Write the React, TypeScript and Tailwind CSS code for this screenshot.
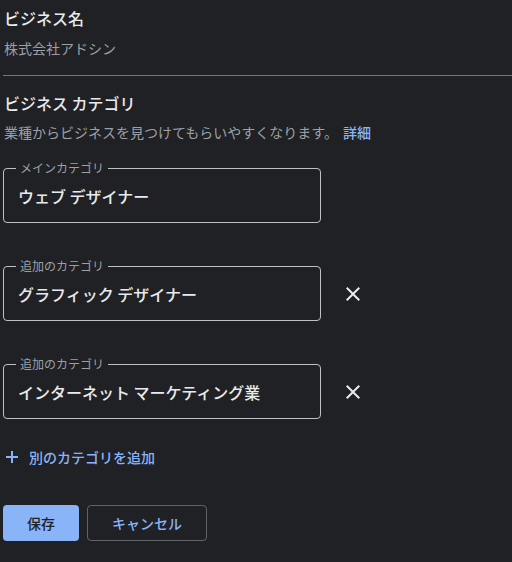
import React from "react";

const font = { fontFamily: '"Noto Sans CJK JP", Roboto, "Noto Sans", sans-serif' };

function CloseIcon() {
  return (
    <svg width="24" height="24" viewBox="0 0 24 24" fill="#e8eaed" aria-hidden="true">
      <path d="M19 6.41L17.59 5 12 10.59 6.41 5 5 6.41 10.59 12 5 17.59 6.41 19 12 13.41 17.59 19 19 17.59 13.41 12z" />
    </svg>
  );
}

function Field({ label, value }: { label: string; value: string }) {
  return (
    <fieldset className="w-[318px] rounded-[4px] border border-[#bdc1c6] px-3 pb-[6px]">
      <legend className="px-1 text-[12px] leading-4 text-[#9aa0a6]">{label}</legend>
      <div className="flex h-10 items-center pl-[2px] text-[16px] font-medium text-[#e8eaed]">{value}</div>
    </fieldset>
  );
}

export default function App() {
  return (
    <div className="min-h-[562px] w-[512px] bg-[#202124] pl-[3px] pt-[6px]" style={font}>
      <h2 className="pl-[1px] text-[16px] font-medium leading-6 text-[#e8eaed]">ビジネス名</h2>
      <p className="mt-2 pl-[1px] text-[14px] leading-5 text-[#9aa0a6]">株式会社アドシン</p>
      <div className="mt-[17px] h-px bg-[#70757a]" />
      <h2 className="mt-[15px] pl-[1px] text-[16px] font-medium leading-6 text-[#e8eaed]">ビジネス カテゴリ</h2>
      <p className="mt-[7px] pl-[1px] text-[14px] leading-5 text-[#9aa0a6]">
        業種からビジネスを見つけてもらいやすくなります。
        <a className="ml-[5px] font-medium text-[#8ab4f8]">詳細</a>
      </p>
      <div className="mt-[18px] flex flex-col gap-[35px]">
        <Field label="メインカテゴリ" value="ウェブ デザイナー" />
        <div className="flex items-start">
          <Field label="追加のカテゴリ" value="グラフィック デザイナー" />
          <button className="ml-5 mt-2 flex h-[55px] items-center">
            <CloseIcon />
          </button>
        </div>
        <div className="flex items-start">
          <Field label="追加のカテゴリ" value="インターネット マーケティング業" />
          <button className="ml-5 mt-2 flex h-[55px] items-center">
            <CloseIcon />
          </button>
        </div>
      </div>
      <button className="mt-[28px] flex h-5 items-center gap-[11px] pl-[3px] text-[14px] font-medium text-[#8ab4f8]">
        <svg width="12" height="12" viewBox="0 0 12 12" aria-hidden="true">
          <path d="M6 0v12M0 6h12" stroke="#8ab4f8" strokeWidth="2" />
        </svg>
        別のカテゴリを追加
      </button>
      <div className="mt-[38px] flex gap-2">
        <button className="h-9 rounded-[4px] bg-[#8ab4f8] px-6 text-[14px] font-medium text-[#202124]">保存</button>
        <button className="h-9 rounded-[4px] border border-[#5f6368] px-6 text-[14px] font-medium text-[#8ab4f8]">キャンセル</button>
      </div>
    </div>
  );
}
